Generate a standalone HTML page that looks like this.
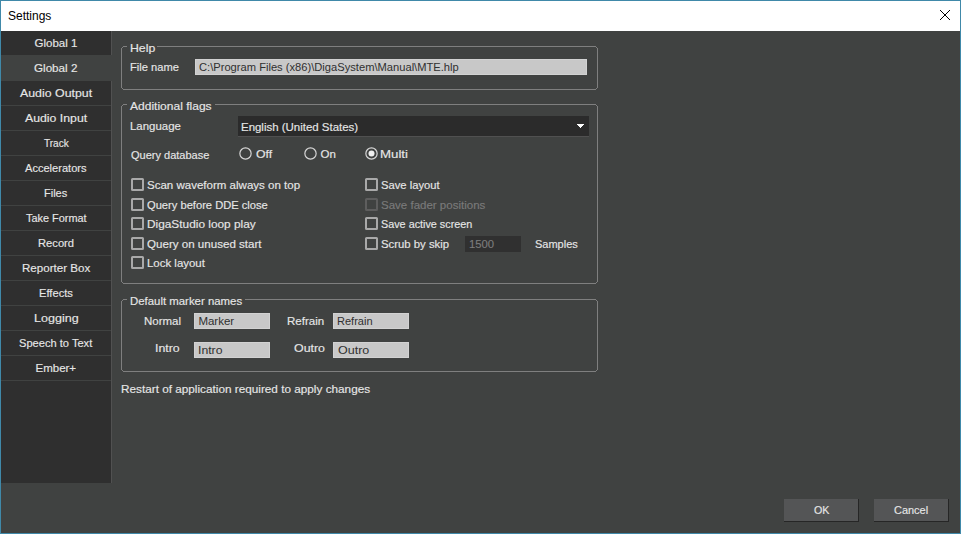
<!DOCTYPE html>
<html><head><meta charset="utf-8"><style>
html,body{margin:0;padding:0;}
body{width:961px;height:534px;position:relative;overflow:hidden;background:#404241;font-family:'Liberation Sans', sans-serif;}
.t{position:absolute;font-size:11.5px;line-height:14px;white-space:pre;transform-origin:0 0;-webkit-text-stroke:0.15px currentColor;}
.gb{position:absolute;border:1px solid #7f7f7f;border-radius:2px;}
.lf{position:absolute;background:#c8c8c8;border:1px solid #d2d2d2;box-sizing:border-box;}
.cb{position:absolute;width:13px;height:13px;box-sizing:border-box;border:2px solid #a9a9a9;border-radius:1.5px;}
.rd{position:absolute;width:13px;height:13px;box-sizing:border-box;border:1px solid #d4d4d4;border-radius:50%;}
.btn{position:absolute;width:75px;height:23px;box-sizing:border-box;background:#545556;border-right:1px solid #262626;border-bottom:1px solid #262626;}
</style></head><body>
<div style="position:absolute;left:0;top:0;width:961px;height:31px;background:#fff"></div>
<svg style="position:absolute;left:940px;top:10px" width="10" height="10" viewBox="0 0 10 10" shape-rendering="crispEdges"><rect x="0" y="0" width="1" height="1"/><rect x="9" y="0" width="1" height="1"/><rect x="1" y="1" width="1" height="1"/><rect x="8" y="1" width="1" height="1"/><rect x="2" y="2" width="1" height="1"/><rect x="7" y="2" width="1" height="1"/><rect x="3" y="3" width="1" height="1"/><rect x="6" y="3" width="1" height="1"/><rect x="4" y="4" width="1" height="1"/><rect x="5" y="4" width="1" height="1"/><rect x="5" y="5" width="1" height="1"/><rect x="4" y="5" width="1" height="1"/><rect x="6" y="6" width="1" height="1"/><rect x="3" y="6" width="1" height="1"/><rect x="7" y="7" width="1" height="1"/><rect x="2" y="7" width="1" height="1"/><rect x="8" y="8" width="1" height="1"/><rect x="1" y="8" width="1" height="1"/><rect x="9" y="9" width="1" height="1"/><rect x="0" y="9" width="1" height="1"/></svg>
<div style="position:absolute;left:1px;top:31px;width:110px;height:452px;background:#2f2f2f"></div>
<div style="position:absolute;left:1px;top:55px;width:110px;height:1px;background:#404241"></div><div style="position:absolute;left:1px;top:80px;width:110px;height:1px;background:#404241"></div><div style="position:absolute;left:1px;top:105px;width:110px;height:1px;background:#404241"></div><div style="position:absolute;left:1px;top:130px;width:110px;height:1px;background:#404241"></div><div style="position:absolute;left:1px;top:155px;width:110px;height:1px;background:#404241"></div><div style="position:absolute;left:1px;top:180px;width:110px;height:1px;background:#404241"></div><div style="position:absolute;left:1px;top:205px;width:110px;height:1px;background:#404241"></div><div style="position:absolute;left:1px;top:230px;width:110px;height:1px;background:#404241"></div><div style="position:absolute;left:1px;top:255px;width:110px;height:1px;background:#404241"></div><div style="position:absolute;left:1px;top:280px;width:110px;height:1px;background:#404241"></div><div style="position:absolute;left:1px;top:305px;width:110px;height:1px;background:#404241"></div><div style="position:absolute;left:1px;top:330px;width:110px;height:1px;background:#404241"></div><div style="position:absolute;left:1px;top:355px;width:110px;height:1px;background:#404241"></div><div style="position:absolute;left:1px;top:380px;width:110px;height:1px;background:#404241"></div>
<div style="position:absolute;left:111px;top:31px;width:1px;height:452px;background:#515151"></div>
<div style="position:absolute;left:1px;top:55px;width:111px;height:26px;background:#404241"></div>
<div style="position:absolute;left:123px;top:46px;width:4px;height:1px;background:#7f7f7f"></div><div style="position:absolute;left:157px;top:46px;width:439px;height:1px;background:#7f7f7f"></div><div style="position:absolute;left:123px;top:89px;width:473px;height:1px;background:#7f7f7f"></div><div style="position:absolute;left:121px;top:48px;width:1px;height:40px;background:#7f7f7f"></div><div style="position:absolute;left:597px;top:48px;width:1px;height:40px;background:#7f7f7f"></div><div style="position:absolute;left:122px;top:47px;width:1px;height:1px;background:#7f7f7f"></div><div style="position:absolute;left:596px;top:47px;width:1px;height:1px;background:#7f7f7f"></div><div style="position:absolute;left:122px;top:88px;width:1px;height:1px;background:#7f7f7f"></div><div style="position:absolute;left:596px;top:88px;width:1px;height:1px;background:#7f7f7f"></div>
<div style="position:absolute;left:123px;top:104px;width:4px;height:1px;background:#7f7f7f"></div><div style="position:absolute;left:215px;top:104px;width:381px;height:1px;background:#7f7f7f"></div><div style="position:absolute;left:123px;top:283px;width:473px;height:1px;background:#7f7f7f"></div><div style="position:absolute;left:121px;top:106px;width:1px;height:176px;background:#7f7f7f"></div><div style="position:absolute;left:597px;top:106px;width:1px;height:176px;background:#7f7f7f"></div><div style="position:absolute;left:122px;top:105px;width:1px;height:1px;background:#7f7f7f"></div><div style="position:absolute;left:596px;top:105px;width:1px;height:1px;background:#7f7f7f"></div><div style="position:absolute;left:122px;top:282px;width:1px;height:1px;background:#7f7f7f"></div><div style="position:absolute;left:596px;top:282px;width:1px;height:1px;background:#7f7f7f"></div>
<div style="position:absolute;left:123px;top:299px;width:4px;height:1px;background:#7f7f7f"></div><div style="position:absolute;left:245px;top:299px;width:351px;height:1px;background:#7f7f7f"></div><div style="position:absolute;left:123px;top:371px;width:473px;height:1px;background:#7f7f7f"></div><div style="position:absolute;left:121px;top:301px;width:1px;height:69px;background:#7f7f7f"></div><div style="position:absolute;left:597px;top:301px;width:1px;height:69px;background:#7f7f7f"></div><div style="position:absolute;left:122px;top:300px;width:1px;height:1px;background:#7f7f7f"></div><div style="position:absolute;left:596px;top:300px;width:1px;height:1px;background:#7f7f7f"></div><div style="position:absolute;left:122px;top:370px;width:1px;height:1px;background:#7f7f7f"></div><div style="position:absolute;left:596px;top:370px;width:1px;height:1px;background:#7f7f7f"></div>
<div class="lf" style="left:195px;top:59px;width:392px;height:16px"></div>
<div style="position:absolute;left:238px;top:116px;width:351px;height:21px;background:#2b2b2b;border-bottom:1px solid #505050;box-sizing:border-box"></div>
<svg style="position:absolute;left:577px;top:124px" width="7" height="4" viewBox="0 0 7 4" shape-rendering="crispEdges"><path d="M0 0H7V1H6V2H5V3H4V4H3V3H2V2H1V1H0Z" fill="#fff"/></svg>
<svg style="position:absolute;left:239px;top:147px" width="13" height="13" viewBox="0 0 13 13"><circle cx="6.5" cy="6.5" r="5.65" stroke="#d6d6d6" stroke-width="1.2" fill="none"/></svg>
<svg style="position:absolute;left:304px;top:147px" width="13" height="13" viewBox="0 0 13 13"><circle cx="6.5" cy="6.5" r="5.65" stroke="#d6d6d6" stroke-width="1.2" fill="none"/></svg>
<svg style="position:absolute;left:365px;top:147px" width="13" height="13" viewBox="0 0 13 13"><circle cx="6.5" cy="6.5" r="5.65" stroke="#d6d6d6" stroke-width="1.2" fill="none"/><circle cx="6.5" cy="6.5" r="3" fill="#f0f0f0"/></svg>
<div class="cb" style="left:131px;top:178px"></div>
<div class="cb" style="left:131px;top:198px"></div>
<div class="cb" style="left:131px;top:217px"></div>
<div class="cb" style="left:131px;top:237px"></div>
<div class="cb" style="left:131px;top:256px"></div>
<div class="cb" style="left:365px;top:178px"></div>
<div class="cb" style="left:365px;top:198px;border-color:#5e5e5e"></div>
<div class="cb" style="left:365px;top:217px"></div>
<div class="cb" style="left:365px;top:237px"></div>
<div style="position:absolute;left:465px;top:236px;width:56px;height:16px;background:#303030"></div>
<div class="lf" style="left:194px;top:313px;width:76px;height:16px"></div>
<div class="lf" style="left:333px;top:313px;width:76px;height:16px"></div>
<div class="lf" style="left:194px;top:342px;width:76px;height:16px"></div>
<div class="lf" style="left:333px;top:342px;width:76px;height:16px"></div>
<div class="btn" style="left:784px;top:499px"></div>
<div class="btn" style="left:874px;top:499px"></div>
<div class="t" style="font-size:12px;-webkit-text-stroke:0;left:8.00px;top:9px;color:#000000;transform:scaleX(1.0000)">Settings</div>
<div class="t" style="left:34.50px;top:36px;color:#e6e6e6;transform:scaleX(1.0000)">Global 1</div>
<div class="t" style="left:34.24px;top:61px;color:#e6e6e6;transform:scaleX(1.0122)">Global 2</div>
<div class="t" style="left:20.00px;top:86px;color:#e6e6e6;transform:scaleX(1.0746)">Audio Output</div>
<div class="t" style="left:25.00px;top:111px;color:#e6e6e6;transform:scaleX(1.0690)">Audio Input</div>
<div class="t" style="left:43.75px;top:136px;color:#e6e6e6;transform:scaleX(0.8750)">Track</div>
<div class="t" style="left:25.20px;top:161px;color:#e6e6e6;transform:scaleX(0.9625)">Accelerators</div>
<div class="t" style="left:44.04px;top:186px;color:#e6e6e6;transform:scaleX(0.9565)">Files</div>
<div class="t" style="left:25.65px;top:211px;color:#e6e6e6;transform:scaleX(0.9484)">Take Format</div>
<div class="t" style="left:37.53px;top:236px;color:#e6e6e6;transform:scaleX(0.9722)">Record</div>
<div class="t" style="left:21.79px;top:261px;color:#e6e6e6;transform:scaleX(1.0061)">Reporter Box</div>
<div class="t" style="left:38.53px;top:286px;color:#e6e6e6;transform:scaleX(0.9706)">Effects</div>
<div class="t" style="left:33.66px;top:311px;color:#e6e6e6;transform:scaleX(1.0897)">Logging</div>
<div class="t" style="left:18.83px;top:336px;color:#e6e6e6;transform:scaleX(0.9653)">Speech to Text</div>
<div class="t" style="left:35.50px;top:361px;color:#e6e6e6;transform:scaleX(1.0000)">Ember+</div>
<div class="t" style="left:130.23px;top:41px;color:#e6e6e6;transform:scaleX(1.0682)">Help</div>
<div class="t" style="left:130.03px;top:60px;color:#e6e6e6;transform:scaleX(0.9673)">File name</div>
<div class="t" style="-webkit-text-stroke:0;left:199.03px;top:60px;color:#303030;transform:scaleX(0.9700)">C:\Program Files (x86)\DigaSystem\Manual\MTE.hlp</div>
<div class="t" style="left:130.20px;top:99px;color:#e6e6e6;transform:scaleX(1.0462)">Additional flags</div>
<div class="t" style="left:130.01px;top:119px;color:#e6e6e6;transform:scaleX(0.9940)">Language</div>
<div class="t" style="left:240.50px;top:120px;color:#e6e6e6;transform:scaleX(0.9957)">English (United States)</div>
<div class="t" style="left:131.00px;top:148px;color:#e6e6e6;transform:scaleX(0.9573)">Query database</div>
<div class="t" style="left:256.00px;top:147px;color:#e6e6e6;transform:scaleX(1.0667)">Off</div>
<div class="t" style="left:320.50px;top:147px;color:#e6e6e6;transform:scaleX(1.0000)">On</div>
<div class="t" style="left:380.35px;top:147px;color:#e6e6e6;transform:scaleX(1.1522)">Multi</div>
<div class="t" style="left:146.50px;top:178px;color:#e6e6e6;transform:scaleX(1.0020)">Scan waveform always on top</div>
<div class="t" style="left:147.00px;top:198px;color:#e6e6e6;transform:scaleX(0.9694)">Query before DDE close</div>
<div class="t" style="left:147.27px;top:217px;color:#e6e6e6;transform:scaleX(1.0305)">DigaStudio loop play</div>
<div class="t" style="left:147.00px;top:237px;color:#e6e6e6;transform:scaleX(1.0070)">Query on unused start</div>
<div class="t" style="left:147.31px;top:256px;color:#e6e6e6;transform:scaleX(0.9947)">Lock layout</div>
<div class="t" style="left:380.53px;top:178px;color:#e6e6e6;transform:scaleX(0.9746)">Save layout</div>
<div class="t" style="left:380.50px;top:198px;color:#7a7a7a;transform:scaleX(1.0010)">Save fader positions</div>
<div class="t" style="left:380.56px;top:217px;color:#e6e6e6;transform:scaleX(0.9396)">Save active screen</div>
<div class="t" style="left:380.51px;top:237px;color:#e6e6e6;transform:scaleX(0.9868)">Scrub by skip</div>
<div class="t" style="left:468.52px;top:237px;color:#7c7c7c;transform:scaleX(0.9792)">1500</div>
<div class="t" style="left:534.54px;top:237px;color:#e6e6e6;transform:scaleX(0.9558)">Samples</div>
<div class="t" style="left:130.01px;top:294px;color:#e6e6e6;transform:scaleX(0.9911)">Default marker names</div>
<div class="t" style="left:143.50px;top:314px;color:#e6e6e6;transform:scaleX(0.9972)">Normal</div>
<div class="t" style="-webkit-text-stroke:0;left:198.40px;top:314px;color:#303030;transform:scaleX(1.0000)">Marker</div>
<div class="t" style="left:286.60px;top:314px;color:#e6e6e6;transform:scaleX(1.0028)">Refrain</div>
<div class="t" style="-webkit-text-stroke:0;left:337.34px;top:314px;color:#303030;transform:scaleX(0.9583)">Refrain</div>
<div class="t" style="left:155.33px;top:341px;color:#e6e6e6;transform:scaleX(1.0727)">Intro</div>
<div class="t" style="-webkit-text-stroke:0;left:198.34px;top:343px;color:#303030;transform:scaleX(1.0636)">Intro</div>
<div class="t" style="left:293.80px;top:341px;color:#e6e6e6;transform:scaleX(1.0786)">Outro</div>
<div class="t" style="-webkit-text-stroke:0;left:338.30px;top:343px;color:#303030;transform:scaleX(1.0893)">Outro</div>
<div class="t" style="left:120.98px;top:382px;color:#e6e6e6;transform:scaleX(1.0227)">Restart of application required to apply changes</div>
<div class="t" style="left:814.40px;top:503px;color:#e6e6e6;transform:scaleX(0.9312)">OK</div>
<div class="t" style="left:894.05px;top:503px;color:#e6e6e6;transform:scaleX(0.9529)">Cancel</div>
<div style="position:absolute;left:0;top:0;width:961px;height:534px;box-sizing:border-box;border:1px solid #4089a9"></div>
</body></html>
